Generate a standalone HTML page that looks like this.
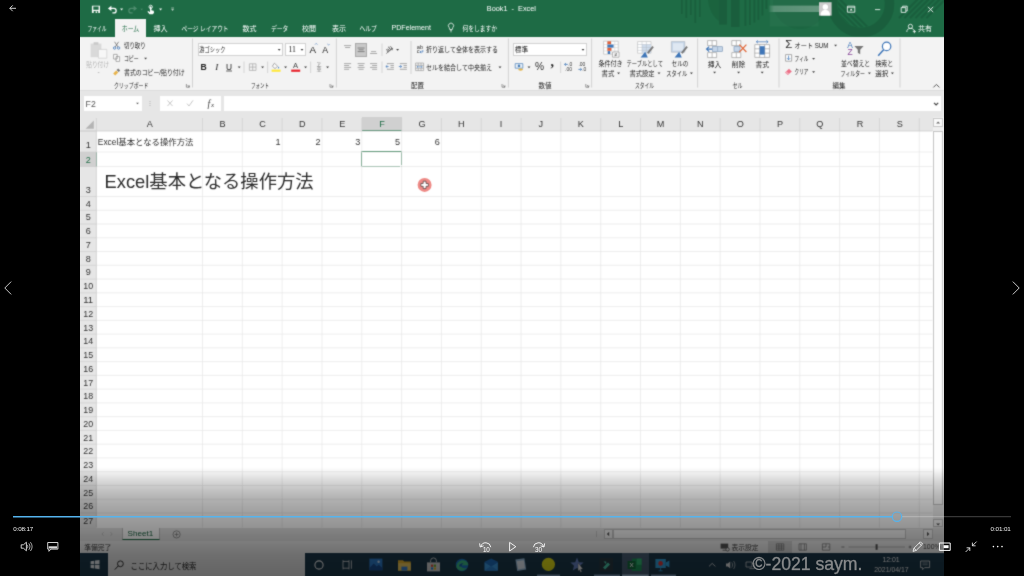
<!DOCTYPE html>
<html lang="ja"><head><meta charset="utf-8"><title>Book1 - Excel</title>
<style>
html,body{margin:0;padding:0;background:#000;}
body{width:1024px;height:576px;overflow:hidden;position:relative;font-family:"Liberation Sans",sans-serif;}
#stage,#top{position:absolute;left:0;top:0;width:1024px;height:576px;overflow:hidden;will-change:transform;}
#stage div,#stage span,#top div,#top span{position:absolute;display:block;box-sizing:border-box;}
svg.layer{position:absolute;left:0;top:0;}
#stage{filter:url(#sb);}
svg.layer text{font-family:"Liberation Sans","Noto Sans CJK JP",sans-serif;}
</style></head><body>
<svg width="0" height="0" style="position:absolute"><filter id="sb" filterUnits="userSpaceOnUse" x="80" y="0" width="864" height="576" color-interpolation-filters="sRGB"><feConvolveMatrix order="3" kernelMatrix="0.03 0.09 0.03 0.09 0.52 0.09 0.03 0.09 0.03" divisor="1" edgeMode="duplicate" preserveAlpha="false"/></filter></svg>
<div id="stage">
<div style="left:80px;top:0px;width:864px;height:36.5px;background:#1e6b45;"></div>
<div style="left:80px;top:36.5px;width:864px;height:53.5px;background:#f3f3f3;"></div>
<div style="left:80px;top:90px;width:864px;height:27px;background:#e6e6e6;border-top:1.2px solid #dcdcdc;"></div>
<div style="left:80px;top:117px;width:864px;height:411px;background:#fff;"></div>
<div style="left:80px;top:527.5px;width:864px;height:13.5px;background:#e4e4e4;"></div>
<div style="left:80px;top:541px;width:864px;height:12px;background:#f1f1f1;"></div>
<div style="left:80px;top:553px;width:864px;height:23px;background:#1d3a4c;"></div>
<span style="left:361.4px;width:300px;text-align:center;top:5.32px;font:400 7.3px/8.76px 'Liberation Sans',sans-serif;color:#fff;white-space:nowrap;">Book1&nbsp; -&nbsp; Excel</span>
<div style="left:114.8px;top:19.4px;width:31.4px;height:17.6px;background:#f3f3f3;"></div>
<span style="left:261.2px;width:300px;text-align:center;top:24.04px;font:400 7.1px/8.52px 'Liberation Sans',sans-serif;color:#fff;white-space:nowrap;">PDFelement</span>
<div style="left:197.5px;top:43px;width:85.6px;height:13.2px;background:#fff;border:.7px solid #d2d2d2;"></div>
<div style="left:284.6px;top:43px;width:21px;height:13.2px;background:#fff;border:.7px solid #d2d2d2;"></div>
<span style="left:288.4px;top:45.13px;font:400 7.8px/9.36px 'Liberation Serif',sans-serif;color:#1a1a1a;white-space:nowrap;">11</span>
<span style="left:309.4px;top:43.65px;font:400 9.8px/11.76px 'Liberation Sans',sans-serif;color:#222;white-space:nowrap;">A</span>
<span style="left:322.2px;top:44.64px;font:400 8.8px/10.56px 'Liberation Sans',sans-serif;color:#222;white-space:nowrap;">A</span>
<span style="left:200.6px;top:61.96px;font:400 8.6px/10.32px 'Liberation Sans',sans-serif;color:#222;white-space:nowrap;"><b>B</b></span>
<span style="left:215.2px;top:61.60px;font:400 9.2px/11.04px 'Liberation Serif',sans-serif;color:#222;white-space:nowrap;"><i>I</i></span>
<span style="left:226px;top:61.67px;font:400 8.4px/10.08px 'Liberation Sans',sans-serif;color:#222;white-space:nowrap;">U</span>
<span style="left:293px;top:61.14px;font:400 7.6px/9.12px 'Liberation Sans',sans-serif;color:#444;white-space:nowrap;">A</span>
<div style="left:354.6px;top:43px;width:12.6px;height:13.6px;background:#c8c8c8;border:.7px solid #ababab;"></div>
<div style="left:513px;top:43px;width:74px;height:13.2px;background:#fff;border:.7px solid #d2d2d2;"></div>
<span style="left:535px;top:60.82px;font:400 10.2px/12.24px 'Liberation Sans',sans-serif;color:#2e2e2e;white-space:nowrap;">%</span>
<span style="left:550.4px;top:53.99px;font:400 14px/16.80px 'Liberation Serif',sans-serif;color:#2a2a2a;white-space:nowrap;"><b>,</b></span>
<span style="left:785.2px;top:37.61px;font:400 11.4px/13.68px 'Liberation Sans',sans-serif;color:#2a2a2a;white-space:nowrap;">Σ</span>
<span style="left:847.2px;top:39.67px;font:400 8.4px/10.08px 'Liberation Sans',sans-serif;color:#3f76b8;white-space:nowrap;">A</span>
<span style="left:847.6px;top:47.47px;font:400 8.4px/10.08px 'Liberation Sans',sans-serif;color:#8a4a9a;white-space:nowrap;">Z</span>
<div style="left:83.5px;top:96px;width:58px;height:15px;background:#fff;"></div>
<div style="left:160px;top:96px;width:61px;height:15px;background:#fff;"></div>
<span style="left:207.4px;top:97.67px;font:400 9.6px/11.52px 'Liberation Serif',sans-serif;color:#444;white-space:nowrap;"><i>f</i></span>
<span style="left:211px;top:101.09px;font:400 7px/8.40px 'Liberation Serif',sans-serif;color:#444;white-space:nowrap;"><i>x</i></span>
<div style="left:224px;top:96.2px;width:717px;height:14.8px;background:#fff;"></div>
<div style="left:80px;top:117px;width:852.5px;height:14px;background:#e6e6e6;"></div>
<div style="left:80px;top:131px;width:16.400000000000006px;height:396.5px;background:#e6e6e6;"></div>
<div style="left:361.78px;top:117px;width:39.82000000000005px;height:14px;background:#d0d0d0;"></div>
<div style="left:361.78px;top:130.2px;width:39.82000000000005px;height:1.2px;background:#2a7a52;"></div>
<div style="left:80px;top:152px;width:16.400000000000006px;height:14.5px;background:#d0d0d0;"></div>
<div style="left:95.5px;top:152px;width:1.1px;height:14.5px;background:#2a7a52;"></div>
<div style="left:361.08px;top:151.3px;width:41.22000000000005px;height:15.9px;background:transparent;border:1.400px solid #217346;"></div>
<div style="left:400.3px;top:165.2px;width:2.8px;height:2.8px;background:#217346;border:.5px solid #fff;"></div>
<div style="left:932.5px;top:117px;width:11.5px;height:410.5px;background:#efefef;"></div>
<div style="left:933.3px;top:117.8px;width:9.6px;height:9.6px;background:#fafafa;border:.6px solid #c8c8c8;"></div>
<div style="left:933.3px;top:130.6px;width:9.6px;height:374px;background:#fdfdfd;border:.6px solid #c4c4c4;"></div>
<div style="left:933.3px;top:519.2px;width:9.6px;height:8.3px;background:#fafafa;border:.6px solid #c8c8c8;"></div>
<div style="left:121.6px;top:527.5px;width:38px;height:12px;background:#fff;border-bottom:1.300px solid #1e6b45;border-left:.6px solid #c4c4c4;border-right:.6px solid #c4c4c4;"></div>
<span style="left:-9.699999999999989px;width:300px;text-align:center;top:528.55px;font:400 8.1px/9.72px 'Liberation Sans',sans-serif;color:#1a6340;white-space:nowrap;">Sheet1</span>
<div style="left:603.6px;top:528.6px;width:9.4px;height:10.6px;background:#f6f6f6;border:.6px solid #c8c8c8;"></div>
<div style="left:613.4px;top:529.2px;width:292.6px;height:9.6px;background:#fbfbfb;border:.6px solid #c8c8c8;"></div>
<div style="left:906px;top:529.2px;width:17px;height:9.6px;background:#ececec;"></div>
<div style="left:923.4px;top:528.6px;width:9.4px;height:10.6px;background:#f6f6f6;border:.6px solid #c8c8c8;"></div>
<div style="left:768.4px;top:541px;width:23.4px;height:12px;background:#d6d6d6;"></div>
<span style="right:83.39999999999998px;top:542.95px;font:400 6.9px/8.28px 'Liberation Sans',sans-serif;color:#444;white-space:nowrap;">100%</span>
<div style="left:108px;top:553px;width:197px;height:23px;background:#efefef;"></div>
<div style="left:621.6px;top:553px;width:27px;height:23px;background:#4a6076;"></div>
<span style="left:741px;width:300px;text-align:center;top:555.55px;font:400 6.9px/8.28px 'Liberation Sans',sans-serif;color:#f2f2f2;white-space:nowrap;">12:01</span>
<span style="left:741.4px;width:300px;text-align:center;top:565.55px;font:400 6.9px/8.28px 'Liberation Sans',sans-serif;color:#f2f2f2;white-space:nowrap;">2021/04/17</span>
<svg class="layer" width="1024" height="576" viewBox="0 0 1024 576">
<defs><clipPath id="cg"><rect x="80" y="0" width="864" height="36.5"/></clipPath><clipPath id="ring"><circle cx="861" cy="4" r="23.5"/></clipPath></defs>
<g clip-path="url(#cg)" opacity=".8"><circle cx="861" cy="4" r="28.5" fill="none" stroke="#195c3b" stroke-width="9.500"/><g clip-path="url(#ring)" stroke="#195c3b" stroke-width="2"><path d="M822 -2l34 34"/><path d="M827.5 -2l34 34"/><path d="M833 -2l34 34"/><path d="M838.5 -2l34 34"/></g><g stroke="#195c3b" stroke-width="2"><path d="M899 18l20 -20"/><path d="M904.5 18l20 -20"/><path d="M910 18l20 -20"/><path d="M915.5 18l20 -20"/><path d="M921 18l20 -20"/><path d="M926.5 18l20 -20"/></g><circle cx="800" cy="2" r="27" fill="#195c3b" opacity=".35"/><rect x="681" y="0" width="1.600" height="14" fill="#195c3b"/><rect x="685.5" y="0" width="1.600" height="18" fill="#195c3b"/><rect x="690" y="0" width="1.600" height="15" fill="#195c3b"/><rect x="694.5" y="0" width="1.600" height="23" fill="#195c3b"/><rect x="699" y="0" width="1.600" height="17" fill="#195c3b"/><path d="M708 0c1 9 5 17 11 21v-21z" fill="#195c3b" opacity=".7"/><rect x="719" y="0" width="8" height="24.500" fill="#195c3b"/><rect x="731" y="0" width="8.500" height="27" fill="#195c3b"/><rect x="744.5" y="0" width="1.800" height="26" fill="#195c3b"/><rect x="749" y="0" width="1.800" height="25" fill="#195c3b"/><rect x="753.5" y="0" width="1.800" height="22.5" fill="#195c3b"/><rect x="757.5" y="0" width="1.800" height="20" fill="#195c3b"/><rect x="761.5" y="0" width="1.800" height="15.5" fill="#195c3b"/><rect x="765.5" y="0" width="1.800" height="9" fill="#195c3b"/></g>
<path d="M91.900 5.700h8.100v7.300h-8.100z" fill="#f4f8f5" stroke="none" stroke-width="1" />
<rect x="93.3" y="6.5" width="5.3" height="3.3" fill="#1e6b45" />
<rect x="93.7" y="11" width="4.5" height="2" fill="#1e6b45" />
<rect x="95.6" y="11.3" width="1.5" height="1.7" fill="#f4f8f5" />
<path d="M110.600 8.400h3.300a2.250 2.250 0 0 1 0 4.500h-1.500" fill="none" stroke="#fff" stroke-width="1.3" />
<path d="M107.900 8.400l3.500 -2.700v5.400z" fill="#fff" stroke="none" stroke-width="1" />
<path d="M120.05 8.55h3.1l-1.55 1.9z" fill="#f0f5f2"/>
<path d="M134.400 8.400h-3.300a2.250 2.250 0 0 0 0 4.500h1.500" fill="none" stroke="#4f8c6e" stroke-width="1.2" />
<path d="M137.100 8.400l-3.500 -2.700v5.400z" fill="#4f8c6e" stroke="none" stroke-width="1" />
<path d="M140.40 8.70h2.6l-1.30 1.6z" fill="#4f8c6e"/>
<circle cx="150.700" cy="6.900" r="1.700" fill="none" stroke="#fff" stroke-width=".8"/>
<path d="M150 6.500h1.400v3.700l2.300 .5l.4 2.100l-1.300 1.500h-3.200l-2.200 -2.600l.9 -.8l1.700 1.300z" fill="#fff" stroke="none" stroke-width="1" />
<path d="M159.05 8.55h3.1l-1.55 1.9z" fill="#f0f5f2"/>
<path d="M171.200 8h2.800" fill="none" stroke="#dfe9e3" stroke-width="0.6" />
<path d="M171.20 9.15h2.8l-1.40 1.7z" fill="#dfe9e3"/>
<defs><linearGradient id="nm" x1="0" x2="1"><stop offset="0" stop-color="#fff" stop-opacity="0"/><stop offset=".12" stop-color="#fff" stop-opacity=".24"/><stop offset="1" stop-color="#fff" stop-opacity=".3"/></linearGradient></defs>
<rect x="769.6" y="0" width="49" height="26.5" fill="rgba(255,255,255,.035)" />
<rect x="768" y="5.6" width="51" height="6.4" fill="url(#nm)" />
<rect x="819" y="2.2" width="12.6" height="13.4" fill="#cbcbcb" />
<circle cx="825.3" cy="7" r="2.7" fill="#fff"/>
<path d="M820.6 15.6c0 -4.4 2 -5.6 4.7 -5.6s4.7 1.2 4.7 5.6z" fill="#fff" stroke="none" stroke-width="1" />
<path d="M847.4 6.2h7.4v6h-7.4z" fill="none" stroke="#fff" stroke-width="0.8" />
<path d="M849.6 10.6h3l-1.5 -2z" fill="#fff" stroke="none" stroke-width="1" />
<path d="M847.4 7.6h7.4" fill="none" stroke="#fff" stroke-width="0.6" />
<path d="M875 9.6h5.2" fill="none" stroke="#fff" stroke-width="0.8" />
<path d="M901.2 7.6h4.6v4.8h-4.6zM902.6 7.6v-1.4h4.6v4.8h-1.4" fill="none" stroke="#fff" stroke-width="0.8" />
<path d="M928 6.8l5.2 5.4M933.2 6.8l-5.2 5.4" fill="none" stroke="#fff" stroke-width="0.85" />
<text x="87.5" y="30.62" font-size="6.9" fill="#fff" textLength="19" lengthAdjust="spacingAndGlyphs">ファイル</text>
<text x="121.8" y="30.62" font-size="6.9" fill="#1e6b45" textLength="17.4" lengthAdjust="spacingAndGlyphs">ホーム</text>
<text x="153.4" y="30.62" font-size="6.9" fill="#fff" textLength="14.2" lengthAdjust="spacingAndGlyphs">挿入</text>
<text x="181.5" y="30.62" font-size="6.9" fill="#fff" textLength="47.06" lengthAdjust="spacingAndGlyphs">ページ レイアウト</text>
<text x="242.6" y="30.62" font-size="6.9" fill="#fff" textLength="14" lengthAdjust="spacingAndGlyphs">数式</text>
<text x="271" y="30.62" font-size="6.9" fill="#fff" textLength="17.4" lengthAdjust="spacingAndGlyphs">データ</text>
<text x="302" y="30.62" font-size="6.9" fill="#fff" textLength="14" lengthAdjust="spacingAndGlyphs">校閲</text>
<text x="332" y="30.62" font-size="6.9" fill="#fff" textLength="14" lengthAdjust="spacingAndGlyphs">表示</text>
<text x="359.5" y="30.62" font-size="6.9" fill="#fff" textLength="17.31" lengthAdjust="spacingAndGlyphs">ヘルプ</text>
<path d="M449.2 27.6a2.6 2.6 0 1 1 3.6 0l-.5 1.9h-2.6z" fill="none" stroke="#fff" stroke-width="0.75" />
<path d="M450 30.6h2M450.3 31.8h1.4" fill="none" stroke="#fff" stroke-width="0.6" />
<text x="462.4" y="30.62" font-size="6.9" fill="#fff" textLength="34.62" lengthAdjust="spacingAndGlyphs">何をしますか</text>
<circle cx="910.4" cy="26.4" r="2.1" fill="none" stroke="#fff" stroke-width=".8"/>
<path d="M906.8 32c0 -2.6 1.4 -3.6 3.6 -3.6s3.4 .8 3.6 2.2M912.8 31.6h3.2M914.4 30v3.2" fill="none" stroke="#fff" stroke-width="0.75" />
<text x="918" y="30.62" font-size="6.9" fill="#fff" textLength="14" lengthAdjust="spacingAndGlyphs">共有</text>
<path d="M90.6 43.6h10.8v13.6h-10.8z" fill="#d9d9d9" stroke="none" stroke-width="1" />
<path d="M93.6 42.2h4.8v2.6h-4.8z" fill="#c9c9c9" stroke="none" stroke-width="1" />
<path d="M98.4 49.4h8.4v8.8h-8.4z" fill="#f7f7f7" stroke="#cfcfcf" stroke-width="0.7" />
<text x="86.2" y="66.71" font-size="6.6" fill="#b4b4b4" textLength="22.8" lengthAdjust="spacingAndGlyphs">貼り付け</text>
<path d="M97.40 71.90h2.4l-1.20 1.4z" fill="#bdbdbd"/>
<path d="M114.6 41.8l3.4 5.2M118.6 41.8l-3.4 5.2" fill="none" stroke="#666" stroke-width="0.75" />
<circle cx="114.6" cy="48" r="1.2" fill="none" stroke="#3f76b8" stroke-width=".8"/><circle cx="118.6" cy="48" r="1.2" fill="none" stroke="#3f76b8" stroke-width=".8"/>
<text x="124" y="47.75" font-size="6.7" fill="#1c1c1c" textLength="21.6" lengthAdjust="spacingAndGlyphs">切り取り</text>
<path d="M113.6 54.4h3.6v4.6h-3.6zM116 56.6h3.6v4.8h-3.6z" fill="#fff" stroke="#7a7a7a" stroke-width="0.6" />
<text x="124" y="60.95" font-size="6.7" fill="#1c1c1c" textLength="14.61" lengthAdjust="spacingAndGlyphs">コピー</text>
<path d="M144.15 57.75h2.9l-1.45 1.7z" fill="#3c3c3c"/>
<path d="M113.2 73.4l3 -3l2 2l-3 3z" fill="#e8b34a" stroke="none" stroke-width="1" />
<path d="M116.6 70l1.6 -1.6l2 2l-1.6 1.6z" fill="#777" stroke="none" stroke-width="1" />
<text x="124" y="74.55" font-size="6.7" fill="#1c1c1c" textLength="60.57" lengthAdjust="spacingAndGlyphs">書式のコピー/貼り付け</text>
<text x="113.95" y="87.65" font-size="6.7" fill="#2a2a2a" textLength="34.51" lengthAdjust="spacingAndGlyphs">クリップボード</text>
<path d="M186.4 84.0v3.2h3.2M187.6 85.0l1.6 1.6M189.4 85.39999999999999v1.4h-1.4" fill="none" stroke="#666" stroke-width="0.65" />
<path d="M192.5 38.5L192.5 87.5" stroke="#c9c9c9" stroke-width="0.8" fill="none" />
<text x="199.2" y="52.15" font-size="6.7" fill="#1c1c1c" textLength="26.2" lengthAdjust="spacingAndGlyphs">游ゴシック</text>
<path d="M277.75 48.95h2.9l-1.45 1.7z" fill="#3c3c3c"/>
<path d="M300.55 48.95h2.9l-1.45 1.7z" fill="#3c3c3c"/>
<path d="M315 44.6l1.2 -1.2l1.2 1.2" fill="none" stroke="#3f76b8" stroke-width="0.6" />
<path d="M327.4 44l1.1 1.1l1.1 -1.1" fill="none" stroke="#3f76b8" stroke-width="0.6" />
<path d="M226.2 71L232 71" stroke="#222" stroke-width="0.7" fill="none" />
<path d="M237.75 66.55h2.9l-1.45 1.7z" fill="#3c3c3c"/>
<path d="M244 61.5L244 73" stroke="#c9c9c9" stroke-width="0.7" fill="none" />
<path d="M249.4 63.8h6.6v6.6h-6.6zM252.7 63.8v6.6M249.4 67.1h6.6" fill="none" stroke="#9a9a9a" stroke-width="0.6" />
<path d="M261.15 66.55h2.9l-1.45 1.7z" fill="#3c3c3c"/>
<path d="M267.6 61.5L267.6 73" stroke="#c9c9c9" stroke-width="0.7" fill="none" />
<path d="M274.4 63.2l3.2 3l-2.6 2.4l-2.6 -2.4z" fill="#fbfbfb" stroke="#777" stroke-width="0.6" />
<path d="M278.6 66.4c.8 1 .8 1.8 0 2.2c-.8 -.4 -.8 -1.2 0 -2.2z" fill="#4a86c8" stroke="none" stroke-width="1" />
<rect x="271.6" y="69.6" width="9" height="2.2" fill="#ffe83a" />
<path d="M284.15 66.55h2.9l-1.45 1.7z" fill="#3c3c3c"/>
<rect x="291.2" y="69.6" width="9" height="2.2" fill="#e8202a" />
<path d="M304.15 66.55h2.9l-1.45 1.7z" fill="#3c3c3c"/>
<path d="M310.6 61.5L310.6 73" stroke="#c9c9c9" stroke-width="0.7" fill="none" />
<text x="316.6" y="66.47" font-size="4.4" fill="#666">ア</text>
<text x="316.4" y="71.38" font-size="5.2" fill="#8a8a8a">亜</text>
<path d="M326.15 66.55h2.9l-1.45 1.7z" fill="#3c3c3c"/>
<text x="251" y="87.65" font-size="6.7" fill="#2a2a2a" textLength="18" lengthAdjust="spacingAndGlyphs">フォント</text>
<path d="M330.0 84.0v3.2h3.2M331.20000000000005 85.0l1.6 1.6M333.0 85.39999999999999v1.4h-1.4" fill="none" stroke="#666" stroke-width="0.65" />
<path d="M336.4 38.5L336.4 87.5" stroke="#c9c9c9" stroke-width="0.8" fill="none" />
<path d="M344.10 45.60h7M345.10 47.50h5" fill="none" stroke="#8a8a8a" stroke-width="0.7" />
<path d="M357.60 48.00h7M358.60 49.80h5M357.60 51.60h7" fill="none" stroke="#666" stroke-width="0.7" />
<path d="M371.10 51.60h5M370.10 53.50h7" fill="none" stroke="#8a8a8a" stroke-width="0.7" />
<path d="M382 43.5L382 56" stroke="#c9c9c9" stroke-width="0.7" fill="none" />
<g transform="rotate(-38 389.500 49.500)">
<text x="386" y="50.76" font-size="6.2" fill="#3a3a3a">ab</text>
</g>
<path d="M386.200 53.600l6.400 -5.200M392.600 48.400l-.3 1.900M392.600 48.400l-1.900 .2" fill="none" stroke="#555" stroke-width="0.65" />
<path d="M396.15 48.95h2.9l-1.45 1.7z" fill="#3c3c3c"/>
<path d="M344.10 63.60h7M344.10 65.50h5M344.10 67.40h7M344.10 69.30h5" fill="none" stroke="#8a8a8a" stroke-width="0.7" />
<path d="M357.60 63.60h7M358.60 65.50h5M357.60 67.40h7M358.60 69.30h5" fill="none" stroke="#8a8a8a" stroke-width="0.7" />
<path d="M370.10 63.60h7M372.10 65.50h5M370.10 67.40h7M372.10 69.30h5" fill="none" stroke="#8a8a8a" stroke-width="0.7" />
<path d="M382 61.5L382 73" stroke="#c9c9c9" stroke-width="0.7" fill="none" />
<path d="M386.90 63.60h7M390.50 65.50h3.4M390.50 67.40h3.4M386.90 69.30h7" fill="none" stroke="#8a8a8a" stroke-width="0.7" />
<path d="M388.6 66.5h-2.6M387.4 65.2l-1.6 1.3l1.6 1.3" fill="none" stroke="#3f76b8" stroke-width="0.7" />
<path d="M399.90 63.60h7M403.50 65.50h3.4M403.50 67.40h3.4M399.90 69.30h7" fill="none" stroke="#8a8a8a" stroke-width="0.7" />
<path d="M398.8 66.5h2.6M400.2 65.2l1.6 1.3l-1.6 1.3" fill="none" stroke="#3f76b8" stroke-width="0.7" />
<path d="M411 41L411 74" stroke="#c9c9c9" stroke-width="0.8" fill="none" />
<text x="416.8" y="48.73" font-size="5.6" fill="#333">ab</text>
<text x="416.8" y="53.33" font-size="5.6" fill="#333">c</text>
<path d="M420 52h2.800v-2M421.200 50.900l-1.300 1.100l1.300 1.100" fill="none" stroke="#3f76b8" stroke-width="0.7" />
<text x="426" y="52.15" font-size="6.7" fill="#1c1c1c" textLength="72" lengthAdjust="spacingAndGlyphs">折り返して全体を表示する</text>
<path d="M415.6 63h8v7.6h-8zM415.6 65.4h8M415.6 68.2h8M418.2 63v2.4M421 63v2.4M418.2 68.2v2.4M421 68.2v2.4" fill="none" stroke="#8a8a8a" stroke-width="0.55" />
<path d="M417 66.8h5.2M418 66l-1 .8l1 .8M421.2 66l1 .8l-1 .8" fill="none" stroke="#3f76b8" stroke-width="0.55" />
<text x="426" y="69.95" font-size="6.7" fill="#1c1c1c" textLength="66" lengthAdjust="spacingAndGlyphs">セルを結合して中央揃え</text>
<path d="M498.55 66.55h2.9l-1.45 1.7z" fill="#3c3c3c"/>
<text x="411.1" y="87.65" font-size="6.7" fill="#2a2a2a" textLength="13" lengthAdjust="spacingAndGlyphs">配置</text>
<path d="M502.0 84.0v3.2h3.2M503.20000000000005 85.0l1.6 1.6M505.0 85.39999999999999v1.4h-1.4" fill="none" stroke="#666" stroke-width="0.65" />
<path d="M508.4 38.5L508.4 87.5" stroke="#c9c9c9" stroke-width="0.8" fill="none" />
<text x="514.8" y="52.15" font-size="6.7" fill="#1c1c1c" textLength="13.4" lengthAdjust="spacingAndGlyphs">標準</text>
<path d="M581.55 48.95h2.9l-1.45 1.7z" fill="#3c3c3c"/>
<path d="M515.2 63.6h7.6v4.6h-7.6z" fill="#eaf1f8" stroke="#4a7fb8" stroke-width="0.7" />
<circle cx="519" cy="65.9" r="1.3" fill="#4a7fb8"/><ellipse cx="520.6" cy="69.6" rx="2.4" ry="1.1" fill="#e3b44c"/>
<path d="M527.55 66.55h2.9l-1.45 1.7z" fill="#3c3c3c"/>
<path d="M560.6 61.5L560.6 73" stroke="#c9c9c9" stroke-width="0.7" fill="none" />
<path d="M567.800 64.400h-3.200M565.900 63.100l-1.400 1.300l1.400 1.300" fill="none" stroke="#3f76b8" stroke-width="0.8" />
<text x="568.2" y="66.05" font-size="5" fill="#333">.0</text>
<text x="565" y="71.05" font-size="5" fill="#333">.00</text>
<text x="578.4" y="66.05" font-size="5" fill="#333">.00</text>
<text x="582.2" y="71.05" font-size="5" fill="#333">.0</text>
<path d="M578.400 69.400h3.200M580.300 68.100l1.400 1.300l-1.400 1.300" fill="none" stroke="#3f76b8" stroke-width="0.8" />
<text x="538.5" y="87.65" font-size="6.7" fill="#2a2a2a" textLength="13" lengthAdjust="spacingAndGlyphs">数値</text>
<path d="M585.8 84.0v3.2h3.2M587.0 85.0l1.6 1.6M588.8 85.39999999999999v1.4h-1.4" fill="none" stroke="#666" stroke-width="0.65" />
<path d="M591.6 38.5L591.6 87.5" stroke="#c9c9c9" stroke-width="0.8" fill="none" />
<path d="M603.600 41.200h14.600v13h-14.600z" fill="#fff" stroke="#b4b4b4" stroke-width="0.6" />
<path d="M603.600 44.450h14.600M603.600 47.700h14.600M603.600 50.950h14.600M607.400 41.200v13M611.200 41.200v13M614.800 41.200v13" fill="none" stroke="#c8c8c8" stroke-width="0.5" />
<rect x="607.4" y="41.3" width="3.6" height="3" fill="#e0603a" />
<rect x="607.4" y="44.6" width="6.2" height="3" fill="#3f76b8" />
<rect x="607.4" y="47.9" width="4" height="2.9" fill="#e0603a" />
<rect x="607.8" y="51.1" width="2.4" height="2.9" fill="#3f76b8" />
<path d="M612.600 52h6.400v5.200h-6.400z" fill="#fff" stroke="#8a8a8a" stroke-width="0.6" />
<path d="M614.400 54h2.800M614.400 55.400h2.800M616.600 53l-1.600 3.400" fill="none" stroke="#555" stroke-width="0.5" />
<text x="598.4" y="66.35" font-size="6.7" fill="#1c1c1c" textLength="24.2" lengthAdjust="spacingAndGlyphs">条件付き</text>
<text x="601.6" y="75.55" font-size="6.7" fill="#1c1c1c" textLength="12.8" lengthAdjust="spacingAndGlyphs">書式</text>
<path d="M617.15 72.55h2.9l-1.45 1.7z" fill="#3c3c3c"/>
<path d="M637.600 41.600h13.400v11.600h-13.400z" fill="#fff" stroke="#b8b8b8" stroke-width="0.6" />
<rect x="642" y="44.5" width="9" height="8.7" fill="#cfdcec" />
<path d="M637.6 44.5h13.4M637.6 47.4h13.4M637.6 50.3h13.4M642 41.6v11.6M646.4 41.6v11.6" fill="none" stroke="#b4bcc6" stroke-width="0.5" />
<path d="M640.6 57.4l4.6 -5.6l2.6 5.6z" fill="#3f76b8" stroke="none" stroke-width="1" />
<path d="M647 52.6l5.4 -6.6l1.4 1.2l-5.2 6.6z" fill="#777" stroke="none" stroke-width="1" />
<text x="626.6" y="66.35" font-size="6.7" fill="#1c1c1c" textLength="36.4" lengthAdjust="spacingAndGlyphs">テーブルとして</text>
<text x="629.4" y="75.55" font-size="6.7" fill="#1c1c1c" textLength="25.2" lengthAdjust="spacingAndGlyphs">書式設定</text>
<path d="M657.55 72.55h2.9l-1.45 1.7z" fill="#3c3c3c"/>
<path d="M671.4 41.6h13.4v10.6h-13.4z" fill="#c5d5e8" stroke="#a8b0ba" stroke-width="0.6" />
<path d="M673 43.2h10.2v7.4h-10.2z" fill="#dfe8f2" stroke="none" stroke-width="1" />
<path d="M674.6 57.4l4.6 -5.6l2.6 5.6z" fill="#3f76b8" stroke="none" stroke-width="1" />
<path d="M681 52.6l5.4 -6.6l1.4 1.2l-5.2 6.6z" fill="#777" stroke="none" stroke-width="1" />
<text x="671.6" y="66.35" font-size="6.7" fill="#1c1c1c" textLength="16.8" lengthAdjust="spacingAndGlyphs">セルの</text>
<text x="666.2" y="75.55" font-size="6.7" fill="#1c1c1c" textLength="21" lengthAdjust="spacingAndGlyphs">スタイル</text>
<path d="M689.95 72.55h2.9l-1.45 1.7z" fill="#3c3c3c"/>
<text x="635.1" y="87.65" font-size="6.7" fill="#2a2a2a" textLength="19" lengthAdjust="spacingAndGlyphs">スタイル</text>
<path d="M697.6 38.5L697.6 87.5" stroke="#c9c9c9" stroke-width="0.8" fill="none" />
<path d="M707.600 40.600h9v5h-9zM707.600 52.600h9v5h-9zM712.100 40.600v5M712.100 52.600v5" fill="#fff" stroke="#8f8f8f" stroke-width="0.6" />
<rect x="712.6" y="46.7" width="10" height="4.8" fill="#c5d5e8" stroke="#7a94b4" stroke-width=".6"/>
<path d="M717.600 46.700v4.800" fill="none" stroke="#7a94b4" stroke-width="0.5" />
<path d="M712.200 49.100h-5.600M709.200 46.600l-2.700 2.500l2.700 2.500" fill="none" stroke="#3f76b8" stroke-width="1.1" />
<text x="707.8" y="66.75" font-size="6.7" fill="#1c1c1c" textLength="13.6" lengthAdjust="spacingAndGlyphs">挿入</text>
<path d="M713.15 71.75h2.9l-1.45 1.7z" fill="#3c3c3c"/>
<path d="M731.800 40.600h9v5h-9zM731.800 52.600h9v5h-9zM736.300 40.600v5M736.300 52.600v5" fill="#fff" stroke="#8f8f8f" stroke-width="0.6" />
<rect x="734" y="46.7" width="6" height="4.8" fill="#c5d5e8" stroke="#7a94b4" stroke-width=".6"/>
<path d="M739.400 44.600l7 7.400M746.400 44.600l-7 7.400" fill="none" stroke="#e0683a" stroke-width="1.2" />
<text x="731.8" y="66.75" font-size="6.7" fill="#1c1c1c" textLength="13.6" lengthAdjust="spacingAndGlyphs">削除</text>
<path d="M737.15 71.75h2.9l-1.45 1.7z" fill="#3c3c3c"/>
<path d="M754.800 44.600h14.800v12.800h-14.800zM754.800 48.800h14.800M754.800 53.100h14.800M759.700 44.600v12.800M764.700 44.600v12.800" fill="#fff" stroke="#8f8f8f" stroke-width="0.6" />
<rect x="759.7" y="46.2" width="5" height="8.4" fill="#3f76b8" />
<path d="M756.400 41.800h11.600M758 40.400l-1.700 1.400l1.700 1.400M766.400 40.400l1.700 1.400l-1.700 1.400" fill="none" stroke="#3f76b8" stroke-width="0.7" />
<text x="755.4" y="66.75" font-size="6.7" fill="#1c1c1c" textLength="13.6" lengthAdjust="spacingAndGlyphs">書式</text>
<path d="M760.75 71.75h2.9l-1.45 1.7z" fill="#3c3c3c"/>
<text x="732.6" y="87.65" font-size="6.7" fill="#2a2a2a" textLength="10" lengthAdjust="spacingAndGlyphs">セル</text>
<path d="M779 38.5L779 87.5" stroke="#c9c9c9" stroke-width="0.8" fill="none" />
<text x="794.6" y="47.75" font-size="6.7" fill="#1c1c1c" textLength="33.8" lengthAdjust="spacingAndGlyphs">オート SUM</text>
<path d="M834.15 44.75h2.9l-1.45 1.7z" fill="#3c3c3c"/>
<path d="M785.6 54.6h6v6.600h-6z" fill="#fff" stroke="#777" stroke-width="0.6" />
<path d="M788.6 55.6v4M787 58.2l1.6 1.6l1.6 -1.6" fill="none" stroke="#3f76b8" stroke-width="0.8" />
<text x="794.6" y="60.95" font-size="6.7" fill="#1c1c1c" textLength="13.8" lengthAdjust="spacingAndGlyphs">フィル</text>
<path d="M812.15 57.95h2.9l-1.45 1.7z" fill="#3c3c3c"/>
<path d="M785 72.4l4 -3.6l2.8 2.6l-4 3.6z" fill="#ec6f86" stroke="none" stroke-width="1" />
<path d="M785 72.4l1.4 -1.2l2.8 2.6l-1.4 1.2z" fill="#f3a8b6" stroke="none" stroke-width="1" />
<text x="794.6" y="74.35" font-size="6.7" fill="#1c1c1c" textLength="13.8" lengthAdjust="spacingAndGlyphs">クリア</text>
<path d="M812.15 71.35h2.9l-1.45 1.7z" fill="#3c3c3c"/>
<path d="M854.4 46h9.2l-3.4 3.8v4.400l-2.400 -1.400v-3z" fill="#777" stroke="none" stroke-width="1" />
<text x="841" y="66.35" font-size="6.7" fill="#1c1c1c" textLength="29.2" lengthAdjust="spacingAndGlyphs">並べ替えと</text>
<text x="840.6" y="75.55" font-size="6.7" fill="#1c1c1c" textLength="24.4" lengthAdjust="spacingAndGlyphs">フィルター</text>
<path d="M867.95 72.55h2.9l-1.45 1.7z" fill="#3c3c3c"/>
<circle cx="886.6" cy="46.4" r="4.2" fill="#fff" stroke="#3f76b8" stroke-width="1.2"/>
<path d="M883.6 49.8l-5.4 6" fill="none" stroke="#3f76b8" stroke-width="1.5" />
<text x="875.4" y="66.35" font-size="6.7" fill="#1c1c1c" textLength="17.79" lengthAdjust="spacingAndGlyphs">検索と</text>
<text x="875.2" y="75.55" font-size="6.7" fill="#1c1c1c" textLength="13" lengthAdjust="spacingAndGlyphs">選択</text>
<path d="M890.95 72.55h2.9l-1.45 1.7z" fill="#3c3c3c"/>
<text x="832.5" y="87.65" font-size="6.7" fill="#2a2a2a" textLength="13" lengthAdjust="spacingAndGlyphs">編集</text>
<path d="M900 38.5L900 87.5" stroke="#c9c9c9" stroke-width="0.8" fill="none" />
<path d="M933.4 87.4l3 -3l3 3" fill="none" stroke="#555" stroke-width="1" />
<text x="85.6" y="106.77" font-size="8.7" fill="#555">F2</text>
<path d="M136.10 102.70h2.8l-1.40 1.6z" fill="#555"/>
<rect x="149.6" y="101.1" width="0.8" height="0.8" fill="#9a9a9a" />
<rect x="149.6" y="103.1" width="0.8" height="0.8" fill="#9a9a9a" />
<rect x="149.6" y="105.1" width="0.8" height="0.8" fill="#9a9a9a" />
<path d="M167.5 100.5l5 5.5m0 -5.5l-5 5.5" fill="none" stroke="#b9b9b9" stroke-width="0.8" />
<path d="M187 103.6l2 2.4l4 -5.6" fill="none" stroke="#b9b9b9" stroke-width="0.8" />
<path d="M934 102.8l2.1 2.2l2.1 -2.2" fill="none" stroke="#444" stroke-width="1.2" />
<path d="M93.8 120.6v8.2h-8.2z" fill="#b4b4b4" stroke="none" stroke-width="1" />
<path d="M202.50 131V527.5M242.32 131V527.5M282.14 131V527.5M321.96 131V527.5M361.78 131V527.5M401.60 131V527.5M441.42 131V527.5M481.24 131V527.5M521.06 131V527.5M560.88 131V527.5M600.70 131V527.5M640.52 131V527.5M680.34 131V527.5M720.16 131V527.5M759.98 131V527.5M799.80 131V527.5M839.62 131V527.5M879.44 131V527.5M919.26 131V527.5M96.4 152.00H932.5M96.4 166.50H932.5M96.4 196.50H932.5M96.4 210.26H932.5M96.4 224.02H932.5M96.4 237.78H932.5M96.4 251.54H932.5M96.4 265.30H932.5M96.4 279.06H932.5M96.4 292.82H932.5M96.4 306.58H932.5M96.4 320.34H932.5M96.4 334.10H932.5M96.4 347.86H932.5M96.4 361.62H932.5M96.4 375.38H932.5M96.4 389.14H932.5M96.4 402.90H932.5M96.4 416.66H932.5M96.4 430.42H932.5M96.4 444.18H932.5M96.4 457.94H932.5M96.4 471.70H932.5M96.4 485.46H932.5M96.4 499.22H932.5M96.4 512.98H932.5" fill="none" stroke="#e7e7e7" stroke-width="0.7" />
<path d="M96.40 118V131M202.50 118V131M242.32 118V131M282.14 118V131M321.96 118V131M361.78 118V131M401.60 118V131M441.42 118V131M481.24 118V131M521.06 118V131M560.88 118V131M600.70 118V131M640.52 118V131M680.34 118V131M720.16 118V131M759.98 118V131M799.80 118V131M839.62 118V131M879.44 118V131M919.26 118V131M80 131.00H96.4M80 152.00H96.4M80 166.50H96.4M80 196.50H96.4M80 210.26H96.4M80 224.02H96.4M80 237.78H96.4M80 251.54H96.4M80 265.30H96.4M80 279.06H96.4M80 292.82H96.4M80 306.58H96.4M80 320.34H96.4M80 334.10H96.4M80 347.86H96.4M80 361.62H96.4M80 375.38H96.4M80 389.14H96.4M80 402.90H96.4M80 416.66H96.4M80 430.42H96.4M80 444.18H96.4M80 457.94H96.4M80 471.70H96.4M80 485.46H96.4M80 499.22H96.4M80 512.98H96.4" fill="none" stroke="#cfcfcf" stroke-width="0.7" />
<path d="M80 131H932.5M96.4 131V527.5" fill="none" stroke="#cdcdcd" stroke-width="0.8" />
<text x="146.68" y="127.3" font-size="9.1" fill="#333">A</text>
<text x="219.42" y="127.3" font-size="9.1" fill="#333">B</text>
<text x="259.33" y="127.3" font-size="9.1" fill="#333">C</text>
<text x="298.92" y="127.3" font-size="9.1" fill="#333">D</text>
<text x="339.19" y="127.3" font-size="9.1" fill="#333">E</text>
<text x="379.18" y="127.3" font-size="9.1" fill="#1e6b45">F</text>
<text x="418.38" y="127.3" font-size="9.1" fill="#333">G</text>
<text x="458.02" y="127.3" font-size="9.1" fill="#333">H</text>
<text x="499.82" y="127.3" font-size="9.1" fill="#333">I</text>
<text x="538.54" y="127.3" font-size="9.1" fill="#333">J</text>
<text x="577.85" y="127.3" font-size="9.1" fill="#333">K</text>
<text x="618.14" y="127.3" font-size="9.1" fill="#333">L</text>
<text x="656.74" y="127.3" font-size="9.1" fill="#333">M</text>
<text x="696.96" y="127.3" font-size="9.1" fill="#333">N</text>
<text x="736.69" y="127.3" font-size="9.1" fill="#333">O</text>
<text x="777.01" y="127.3" font-size="9.1" fill="#333">P</text>
<text x="816.33" y="127.3" font-size="9.1" fill="#333">Q</text>
<text x="856.64" y="127.3" font-size="9.1" fill="#333">R</text>
<text x="896.64" y="127.3" font-size="9.1" fill="#333">S</text>
<text x="85.67" y="148.4" font-size="9.1" fill="#333">1</text>
<text x="85.67" y="162.9" font-size="9.1" fill="#1e6b45">2</text>
<text x="85.67" y="192.9" font-size="9.1" fill="#333">3</text>
<text x="85.67" y="206.66" font-size="9.1" fill="#333">4</text>
<text x="85.67" y="220.42" font-size="9.1" fill="#333">5</text>
<text x="85.67" y="234.18" font-size="9.1" fill="#333">6</text>
<text x="85.67" y="247.94" font-size="9.1" fill="#333">7</text>
<text x="85.67" y="261.7" font-size="9.1" fill="#333">8</text>
<text x="85.67" y="275.46" font-size="9.1" fill="#333">9</text>
<text x="83.24" y="289.22" font-size="9.1" fill="#333" textLength="9.9" lengthAdjust="spacingAndGlyphs">10</text>
<text x="83.24" y="302.98" font-size="9.1" fill="#333" textLength="9.9" lengthAdjust="spacingAndGlyphs">11</text>
<text x="83.24" y="316.74" font-size="9.1" fill="#333" textLength="9.9" lengthAdjust="spacingAndGlyphs">12</text>
<text x="83.24" y="330.5" font-size="9.1" fill="#333" textLength="9.9" lengthAdjust="spacingAndGlyphs">13</text>
<text x="83.24" y="344.26" font-size="9.1" fill="#333" textLength="9.9" lengthAdjust="spacingAndGlyphs">14</text>
<text x="83.24" y="358.02" font-size="9.1" fill="#333" textLength="9.9" lengthAdjust="spacingAndGlyphs">15</text>
<text x="83.24" y="371.78" font-size="9.1" fill="#333" textLength="9.9" lengthAdjust="spacingAndGlyphs">16</text>
<text x="83.24" y="385.54" font-size="9.1" fill="#333" textLength="9.9" lengthAdjust="spacingAndGlyphs">17</text>
<text x="83.24" y="399.3" font-size="9.1" fill="#333" textLength="9.9" lengthAdjust="spacingAndGlyphs">18</text>
<text x="83.24" y="413.06" font-size="9.1" fill="#333" textLength="9.9" lengthAdjust="spacingAndGlyphs">19</text>
<text x="83.24" y="426.82" font-size="9.1" fill="#333" textLength="9.9" lengthAdjust="spacingAndGlyphs">20</text>
<text x="83.24" y="440.58" font-size="9.1" fill="#333" textLength="9.9" lengthAdjust="spacingAndGlyphs">21</text>
<text x="83.24" y="454.34" font-size="9.1" fill="#333" textLength="9.9" lengthAdjust="spacingAndGlyphs">22</text>
<text x="83.24" y="468.1" font-size="9.1" fill="#333" textLength="9.9" lengthAdjust="spacingAndGlyphs">23</text>
<text x="83.24" y="481.86" font-size="9.1" fill="#333" textLength="9.9" lengthAdjust="spacingAndGlyphs">24</text>
<text x="83.24" y="495.62" font-size="9.1" fill="#333" textLength="9.9" lengthAdjust="spacingAndGlyphs">25</text>
<text x="83.24" y="509.38" font-size="9.1" fill="#333" textLength="9.9" lengthAdjust="spacingAndGlyphs">26</text>
<text x="83.24" y="523.9" font-size="9.1" fill="#333" textLength="9.9" lengthAdjust="spacingAndGlyphs">27</text>
<text x="97.8" y="144.75" font-size="8.3" fill="#2e2e2e" textLength="95.7" lengthAdjust="spacingAndGlyphs">Excel基本となる操作方法</text>
<text x="275.59" y="144.8" font-size="9.1" fill="#333">1</text>
<text x="315.41" y="144.8" font-size="9.1" fill="#333">2</text>
<text x="355.23" y="144.8" font-size="9.1" fill="#333">3</text>
<text x="395.05" y="144.8" font-size="9.1" fill="#333">5</text>
<text x="434.87" y="144.8" font-size="9.1" fill="#333">6</text>
<text x="104.6" y="187.72" font-size="18.2" fill="#2c2c2c" textLength="209" lengthAdjust="spacingAndGlyphs">Excel基本となる操作方法</text>
<circle cx="424.6" cy="184.9" r="7" fill="#ee8a86"/>
<path d="M423.200 181.200h2.800v2.300h2.300v2.800h-2.300v2.300h-2.800v-2.300h-2.300v-2.800h2.300z" fill="#fff" stroke="#4a3a3a" stroke-width="0.7" />
<path d="M936.1 123.6h4l-2 -2.2z" fill="#666" stroke="none" stroke-width="1" />
<path d="M936.1 523.4h4l-2 2.2z" fill="#555" stroke="none" stroke-width="1" />
<path d="M103.6 532.2l-1.6 1.8l1.6 1.8M110.6 532.2l1.6 1.8l-1.6 1.8" fill="none" stroke="#bdbdbd" stroke-width="0.8" />
<circle cx="176.6" cy="534.4" r="3.6" fill="none" stroke="#777" stroke-width=".7"/>
<path d="M174.6 534.4h4M176.6 532.4v4" fill="none" stroke="#777" stroke-width="0.7" />
<rect x="596.2" y="531.6" width="0.8" height="0.8" fill="#8a8a8a" />
<rect x="596.2" y="533.6" width="0.8" height="0.8" fill="#8a8a8a" />
<rect x="596.2" y="535.6" width="0.8" height="0.8" fill="#8a8a8a" />
<path d="M609.2 531.8v4.4l-2.4 -2.2z" fill="#555" stroke="none" stroke-width="1" />
<path d="M927 531.8v4.4l2.4 -2.2z" fill="#555" stroke="none" stroke-width="1" />
<text x="84.2" y="549.71" font-size="6.6" fill="#444" textLength="27.2" lengthAdjust="spacingAndGlyphs">準備完了</text>
<path d="M720.6 543.6h7.6v5h-7.6z" fill="#555" stroke="none" stroke-width="1" />
<path d="M722.6 550.2h3.6" fill="none" stroke="#555" stroke-width="0.8" />
<circle cx="727.6" cy="549.4" r="1.7" fill="#f1f1f1" stroke="#555" stroke-width=".8"/>
<text x="731.6" y="549.71" font-size="6.6" fill="#444" textLength="27" lengthAdjust="spacingAndGlyphs">表示設定</text>
<path d="M776.4 543.8h7.4v6.4h-7.4zM776.4 546h7.4M776.4 548.1h7.4M778.9 543.8v6.4M781.4 543.8v6.4" fill="none" stroke="#6a6a6a" stroke-width="0.6" />
<path d="M799 543.8h7.4v6.4h-7.4zM801 543.8v6.4M804.4 543.8v6.4" fill="none" stroke="#6a6a6a" stroke-width="0.6" />
<path d="M822.4 543.8h7.4v6.4h-7.4zM822.4 547h3.6v-3.2M829.8 547h-1.8" fill="none" stroke="#6a6a6a" stroke-width="0.6" />
<path d="M841.4 547h3" fill="none" stroke="#666" stroke-width="0.7" />
<path d="M848.6 547L905 547" stroke="#9a9a9a" stroke-width="0.6" fill="none" />
<rect x="875.6" y="544.2" width="2" height="5.6" fill="#555" />
<path d="M908.6 547h3M910.1 545.5v3" fill="none" stroke="#666" stroke-width="0.7" />
<path d="M90.6 561.2l3.6 -.5v3.5h-3.6zM94.9 560.6l4.6 -.7v4.3h-4.6zM90.6 564.9h3.6v3.5l-3.6 -.5zM94.9 564.9h4.6v4.3l-4.6 -.7z" fill="#eef2f6" stroke="none" stroke-width="1" />
<circle cx="120.4" cy="563.8" r="2.9" fill="none" stroke="#222" stroke-width=".9"/>
<path d="M118.2 566l-3.4 3.6" fill="none" stroke="#222" stroke-width="1" />
<text x="130.6" y="568.84" font-size="8" fill="#2a2a2a" textLength="65.79" lengthAdjust="spacingAndGlyphs">ここに入力して検索</text>
<circle cx="319" cy="565" r="4.1" fill="none" stroke="#f2f2f2" stroke-width="1.1"/>
<path d="M343 561.400h6v6.800h-6zM343 560.200v1.200M349 560.200v1.200M343 568.200v1.200M349 568.200v1.200M351.400 560.400v8.400" fill="none" stroke="#e0e0e0" stroke-width="0.8" />
<rect x="369.4" y="558.6" width="13" height="11.6" fill="#2f7fd0" />
<path d="M369.4 568l4.4 -4.4l3 2.8l2 -1.6l3.6 3.2v2.2h-13z" fill="#1b4f94" stroke="none" stroke-width="1" />
<circle cx="378.6" cy="561.8" r="1.2" fill="#cfe4fa"/>
<path d="M398 560.2h5l1.2 1.4h6.6v9h-12.8z" fill="#e9b730" stroke="none" stroke-width="1" />
<path d="M398 563.2h12.8v7.4h-12.8z" fill="#f6d264" stroke="none" stroke-width="1" />
<path d="M401.4 566.6h6v4h-6z" fill="#3f86d6" stroke="none" stroke-width="1" />
<path d="M427 562.4h13v9h-13z" fill="#d8d8d8" stroke="none" stroke-width="1" />
<path d="M430.6 562.4v-1.6a2.9 2.9 0 0 1 5.8 0v1.6" fill="none" stroke="#d8d8d8" stroke-width="0.9" />
<rect x="431" y="564.6" width="2.2" height="2.2" fill="#e0503a" />
<rect x="433.8" y="564.6" width="2.2" height="2.2" fill="#6fb33a" />
<rect x="431" y="567.4" width="2.2" height="2.2" fill="#2f8fe0" />
<rect x="433.8" y="567.4" width="2.2" height="2.2" fill="#f0c030" />
<circle cx="462" cy="565" r="6.2" fill="#1f78c8"/>
<path d="M456.4 566.6c.4 -5 5.4 -7.6 9.4 -5.6c2 1 2.6 2.8 2.4 4.2h-7.4c.2 2.6 3.2 3.8 6.2 2.4c-1.6 3 -5.6 4 -8.4 2.2c-1.4 -.9 -2.2 -2 -2.2 -3.200z" fill="#3fc28a" stroke="none" stroke-width="1" />
<path d="M459 566.200c.2 -2.200 2.400 -3.400 4.600 -2.800c-1.400 .6 -2.200 1.800 -2 3.400z" fill="#1b5fa8" stroke="none" stroke-width="1" />
<path d="M484.600 561.800l6.600 -3.400l6.600 3.400v8.600h-13.200z" fill="#1f6fc0" stroke="none" stroke-width="1" />
<path d="M484.600 562.400l6.600 4.200l6.600 -4.200v8h-13.200z" fill="#3f9fe8" stroke="none" stroke-width="1" />
<path d="M484.600 570.400l6.600 -4.600l6.600 4.600z" fill="#2f86d4" stroke="none" stroke-width="1" />
<path d="M515.400 559.400l9 -1.200l1.800 11.200l-9 1.600z" fill="#9fc4e4" stroke="none" stroke-width="1" />
<path d="M516.800 561.200l7 -1l1.200 8l-7 1.200z" fill="#e8f0f8" stroke="none" stroke-width="1" />
<circle cx="548.400" cy="564.400" r="6.600" fill="#e6e21a"/>
<path d="M577 557.600l1.800 4.600l4.800 .4l-3.600 3.200l1.200 4.800l-4.200 -2.600l-4.200 2.600l1.200 -4.800l-3.600 -3.200l4.800 -.4z" fill="#6a86c8" stroke="none" stroke-width="1" />
<path d="M578.200 563l4.600 6l-2.200 .2l1.200 2.600l-1.200 .5l-1.200 -2.600l-1.400 1.400z" fill="#f4f4f4" stroke="#444" stroke-width="0.3" />
<rect x="599.4" y="558" width="13.6" height="13.6" fill="#2a3a44" />
<path d="M603 567.400l5 -5l2 2l-5 5zM603.600 561.600h2.600v2.600z" fill="#4fd0b0" stroke="none" stroke-width="1" />
<path d="M632 558.600h9.600v12.400h-9.600z" fill="#1f9a5c" stroke="none" stroke-width="1" />
<path d="M636.800 558.600h4.800v6.200h-4.800z" fill="#35bf78" stroke="none" stroke-width="1" />
<path d="M627.600 561h8v8h-8z" fill="#15703f" stroke="none" stroke-width="1" />
<path d="M630 563l3.200 4M633.200 563l-3.200 4" fill="none" stroke="#fff" stroke-width="0.9" />
<path d="M655.400 559h10.400v9h-10.400z" fill="#35a6e0" stroke="none" stroke-width="1" />
<path d="M665.800 562.400l3.600 -2v7.200l-3.600 -2z" fill="#35a6e0" stroke="none" stroke-width="1" />
<circle cx="660.600" cy="563.400" r="2.300" fill="#e03a3a"/>
<path d="M658.600 570.800h4M660.600 568v2.800" fill="none" stroke="#35a6e0" stroke-width="0.8" />
<rect x="537" y="574.6" width="23" height="1.4" fill="#8fb0d0" />
<rect x="594" y="574.6" width="26" height="1.4" fill="#8fb0d0" />
<rect x="622" y="574.6" width="26.600000000000023" height="1.4" fill="#b8d4f0" />
<rect x="651" y="574.6" width="25" height="1.4" fill="#8fb0d0" />
<path d="M709 566.400l3.200 -3l3.200 3" fill="none" stroke="#e8e8e8" stroke-width="0.8" />
<path d="M726 563.400h1.800l2.400 -2v7.200l-2.400 -2h-1.800z" fill="#e8e8e8" stroke="none" stroke-width="1" />
<path d="M731.800 562.400c1 1.400 1 3.800 0 5.200M733.600 561c1.800 2.200 1.800 5.800 0 8" fill="none" stroke="#e8e8e8" stroke-width="0.6" />
<path d="M746 562h6v5h-6zM752 563.400h2.400v5.200h-5" fill="none" stroke="#e8e8e8" stroke-width="0.7" />
<path d="M920.600 561h9v6.600h-5l-2 2v-2h-2z" fill="none" stroke="#e8e8e8" stroke-width="0.8" />
<path d="M922.400 563h5.400M922.400 564.800h5.400" fill="none" stroke="#e8e8e8" stroke-width="0.5" />
</svg>
</div>
<div style="position:absolute;left:0;top:0;width:1024px;height:576px;background:linear-gradient(to bottom,rgba(0,0,0,0) 0px,rgba(0,0,0,0) 467px,rgba(0,0,0,0.035) 471px,rgba(0,0,0,0.085) 475px,rgba(0,0,0,0.14) 480px,rgba(0,0,0,0.2) 486px,rgba(0,0,0,0.26) 493px,rgba(0,0,0,0.31) 500px,rgba(0,0,0,0.34) 506px,rgba(0,0,0,0.37) 512px,rgba(0,0,0,0.395) 520px,rgba(0,0,0,0.42) 527px,rgba(0,0,0,0.45) 534px,rgba(0,0,0,0.48) 541px,rgba(0,0,0,0.51) 547px,rgba(0,0,0,0.54) 556px,rgba(0,0,0,0.56) 565px,rgba(0,0,0,0.58) 576px);"></div>
<div id="top">
<span style="left:752.6px;top:553.52px;font:400 17.7px/21.24px 'Liberation Sans',sans-serif;color:rgba(156,156,156,.85);white-space:nowrap;letter-spacing:-.05px;-webkit-text-stroke:.4px rgba(156,156,156,.6);">©-2021 saym.</span>
<span style="left:13.2px;top:524.93px;font:400 6.25px/7.50px 'Liberation Sans',sans-serif;color:#f0f0f0;white-space:nowrap;letter-spacing:-.12px;">0:08:17</span>
<span style="right:13.399999999999977px;top:524.93px;font:400 6.25px/7.50px 'Liberation Sans',sans-serif;color:#f0f0f0;white-space:nowrap;letter-spacing:-.12px;">0:01:01</span>
<span style="left:336.2px;width:300px;text-align:center;top:545.81px;font:400 6.3px/7.56px 'Liberation Sans',sans-serif;color:#fff;white-space:nowrap;letter-spacing:-.2px;">10</span>
<span style="left:388.4px;width:300px;text-align:center;top:545.81px;font:400 6.3px/7.56px 'Liberation Sans',sans-serif;color:#fff;white-space:nowrap;letter-spacing:-.2px;">30</span>
<svg class="layer" width="1024" height="576" viewBox="0 0 1024 576">
<path d="M16 8.300h-6.200M12.700 5.400l-2.900 2.900l2.900 2.900" fill="none" stroke="#e6e6e6" stroke-width="0.9" />
<path d="M11.200 281.600l-6.400 6.400l6.400 6.400" fill="none" stroke="#e0e0e0" stroke-width="0.9" />
<path d="M1012.800 281.600l6.400 6.400l-6.400 6.400" fill="none" stroke="#e0e0e0" stroke-width="0.9" />
<path d="M902 516.7L1011 516.7" stroke="rgba(255,255,255,.27)" stroke-width="1" fill="none" />
<path d="M13 516.7L892.3 516.7" stroke="#55b4ee" stroke-width="1.4" fill="none" />
<circle cx="897" cy="516.700" r="4.700" fill="none" stroke="#55b4ee" stroke-width="1.200"/>
<path d="M21.200 544.800h2.200l3 -2.600v8.600l-3 -2.600h-2.200z" fill="none" stroke="#fff" stroke-width="0.8" />
<path d="M27.200 544.800c.8 1.100 .8 2.500 0 3.600M28.800 543.400c1.500 2 1.500 4.400 0 6.400M30.400 542.200c2.200 2.800 2.200 6 0 8.800" fill="none" stroke="#fff" stroke-width="0.7" />
<path d="M47.700 542.500h10.200v6.600h-7l-2 2.200v-2.200h-1.200z" fill="none" stroke="#e8e8e8" stroke-width="0.9" />
<path d="M48.600 546.300h8.400v2.200h-8.400z" fill="#d8d8d8" stroke="none" stroke-width="1" />
<path d="M480.8 546.6a5.1 5.1 0 0 1 10 .6" fill="none" stroke="#fff" stroke-width="0.9" />
<path d="M479.6 543.4l.6 3.6l3.4 -1.2" fill="none" stroke="#fff" stroke-width="0.9" />
<path d="M509.6 542.4l6.2 4.3l-6.2 4.3z" fill="none" stroke="#fff" stroke-width="0.9" />
<path d="M543.4 546.6a5.1 5.1 0 0 0 -10 .6" fill="none" stroke="#fff" stroke-width="0.9" />
<path d="M544.6 543.4l-.6 3.6l-3.4 -1.2" fill="none" stroke="#fff" stroke-width="0.9" />
<path d="M913 551.400l1 -3.200l6.400 -6.400l2.200 2.200l-6.400 6.400zM914 548.200l2.200 2.200M919.200 543l2.200 2.200" fill="none" stroke="#fff" stroke-width="0.8" />
<path d="M939.400 543h10.800v7.400h-10.800z" fill="none" stroke="#fff" stroke-width="1" />
<path d="M943.600 545.200h5v3h-5z" fill="#fff" stroke="none" stroke-width="1" />
<path d="M976.600 541.600l-4.200 4.200M972.400 542.600v3.200h3.200M965.600 552l4.200 -4.200M969.800 551v-3.200h-3.200" fill="none" stroke="#fff" stroke-width="0.8" />
<circle cx="993.4" cy="546.600" r=".8" fill="#fff"/>
<circle cx="997.7" cy="546.600" r=".8" fill="#fff"/>
<circle cx="1002" cy="546.600" r=".8" fill="#fff"/>
</svg>
</div>
</body></html>
